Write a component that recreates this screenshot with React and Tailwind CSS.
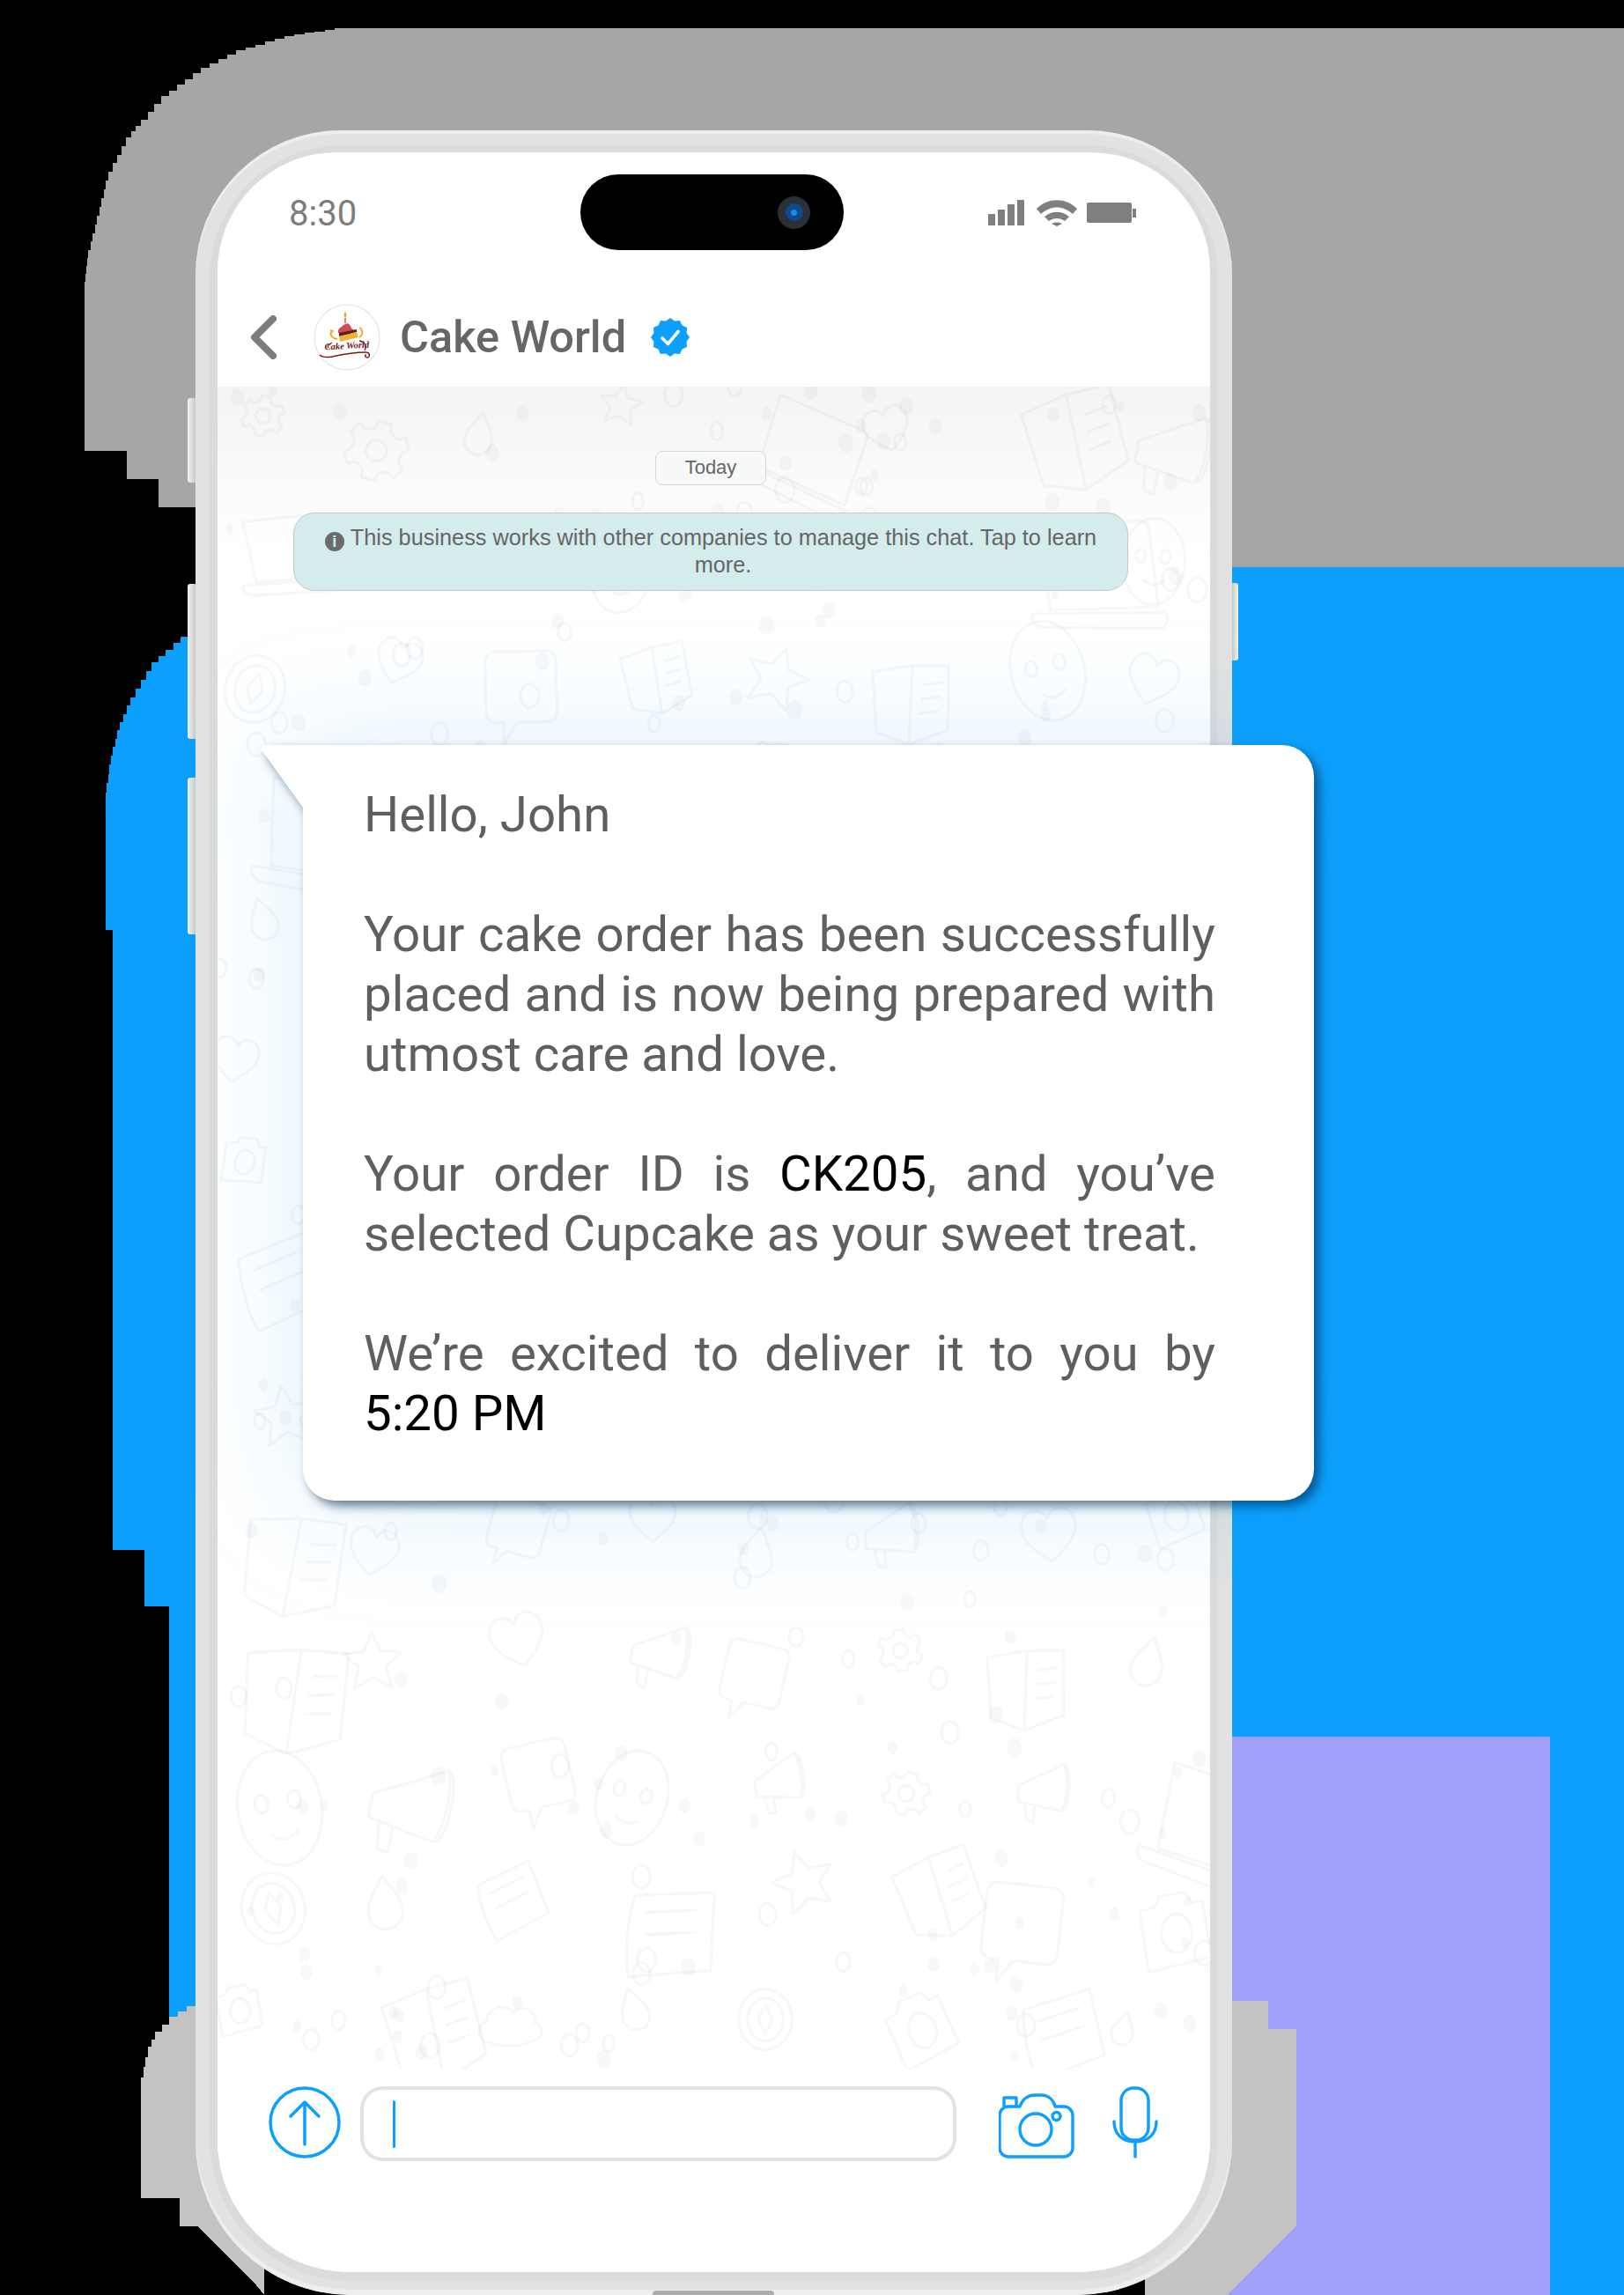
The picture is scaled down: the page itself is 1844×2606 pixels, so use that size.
import React from "react";

// staircase outline for the pixelated blobs behind the phone
function stairs(pts, step = 12) {
  const out = [pts[0]];
  for (let i = 1; i < pts.length; i++) {
    const [x0, y0] = pts[i - 1];
    const [x1, y1] = pts[i];
    const n = Math.max(1, Math.ceil(Math.hypot(x1 - x0, y1 - y0) / step));
    let py = y0;
    for (let k = 1; k <= n; k++) {
      const x = x0 + ((x1 - x0) * k) / n;
      const y = y0 + ((y1 - y0) * k) / n;
      out.push([x, py]);
      out.push([x, y]);
      py = y;
    }
  }
  return out.map((p) => p.join(",")).join(" ");
}

const grayArc = stairs([
  [96, 320], [100, 284], [110, 245], [123, 195], [143, 156], [160, 136], [183, 109], [228, 77], [268, 57], [323, 41], [380, 32],
]);
const blueArc = stairs([
  [120, 900], [124, 868], [128, 848], [136, 820], [148, 792], [172, 752], [213, 716],
]);
const lightArc = stairs([
  [160, 2359], [168, 2324], [176, 2307], [192, 2290], [222, 2272],
]);

function Backdrop() {
  return (
    <svg className="absolute inset-0" width="1844" height="2606" viewBox="0 0 1844 2606" shapeRendering="crispEdges">
      <polygon
        fill="#a6a6a6"
        points={`96,512 96,320 ${grayArc} 1844,32 1844,644 300,644 222,576 180,576 180,544 144,544 144,512`}
      />
      <polygon
        fill="#0c9ffb"
        points={`120,1056 120,900 ${blueArc} 300,716 300,2290 192,2290 192,1824 164,1824 164,1760 128,1760 128,1056`}
      />
      <rect x="1300" y="644" width="544" height="1962" fill="#0c9ffb" />
      <rect x="1300" y="1972" width="460" height="634" fill="#a0a0f8" />
      <polygon
        fill="#c4c3c1"
        points={`160,2496 160,2359 ${lightArc} 300,2272 300,2606 287,2590 224,2528 204,2528 204,2496`}
      />
      <polygon fill="#c4c3c1" points="1300,2272 1440,2272 1440,2304 1472,2304 1472,2527 1394,2606 1300,2606" />
    </svg>
  );
}

// faint chat wallpaper drawings
const shapes = [
  "M10 40c-10-2-10-18 2-20 2-12 20-14 26-4 10-6 22 2 18 14 8 4 6 16-4 16-12 4-30 2-42-6z",
  "M30 2l8 18 20 2-15 13 5 20-18-10-18 10 5-20L2 22l20-2z",
  "M8 18L78 4l8 70-72 18c-6-14-10-50-6-74zM20 32l46-10M22 52l46-10",
  "M30 54C8 38 2 26 8 14c6-10 18-8 22 2 4-10 16-12 22-2 6 12 0 24-22 40z",
  "M34 4a30 34 0 1 1 0 68 30 34 0 0 1 0-68zM34 14a20 24 0 1 1 0 48 20 24 0 0 1 0-48zM34 22l8 16-8 16-8-16z",
  "M30 2c2 18 8 26 26 28-18 2-24 10-26 28-2-18-8-26-26-28 18-2 24-10 26-28z",
  "M4 20L52 6l44-6 10 80-46 24-42-10zM52 6l8 98M68 28l24-6M68 46l24-6M68 64l24-6",
  "M20 2c10 16 16 24 16 34a16 16 0 0 1-32 0C4 26 10 18 20 2z",
  "M14 2h50c8 0 12 4 12 12v50c0 8-4 12-12 12H34L20 98V76h-6C6 76 2 72 2 64V14C2 6 6 2 14 2z",
  "M24 2h12l2 8 8 4 7-4 6 10-6 6v8l6 6-6 10-7-4-8 4-2 8H24l-2-8-8-4-7 4-6-10 6-6v-8l-6-6 6-10 7 4 8-4zM30 20a10 10 0 1 0 0 20 10 10 0 0 0 0-20z",
  "M40 2c22 0 38 24 38 52S62 106 40 106 2 82 2 54 18 2 40 2zM24 40a6 8 0 1 0 .1 0M54 40a6 8 0 1 0 .1 0M28 76c8 8 18 8 26 0",
  "M4 40l62-34c8 16 8 50 0 66L4 62zM66 6c12 0 14 64 0 66M14 62l4 26 10 2 0-24",
  "M6 22L20 18l4-10 24-4 6 10 10-2 8 52-58 14zM40 24a14 18 0 1 0 .1 0",
  "M26 4l100 16c6 1 8 4 8 10l-6 78-106-18zM4 90l126 24c6 1 6 8 2 12l-4 4L14 106C4 104 0 96 4 90z",
];

// fixed pseudo random, so the picture is the same on every run
const rand = (n) => {
  const v = Math.sin(n * 127.1 + 11.7) * 43758.5453;
  return v - Math.floor(v);
};

const doodles = [];
for (let row = 0; row < 14; row++) {
  for (let col = 0; col < 8; col++) {
    const n = row * 8 + col;
    doodles.push({
      d: shapes[Math.floor(rand(n) * shapes.length)],
      x: col * 146 + rand(n + 300) * 50 - 10,
      y: row * 140 + rand(n + 600) * 40 - 10,
      s: 0.75 + rand(n + 900) * 0.55,
      r: rand(n + 1200) * 40 - 20,
    });
  }
}
const dots = Array.from({ length: 340 }, (_, i) => ({
  x: rand(i + 2000) * 1127,
  y: rand(i + 3000) * 1900,
  r: 4 + rand(i + 4000) * 5,
  ring: i % 3 === 0,
}));

function Wallpaper() {
  return (
    <svg className="absolute inset-0 w-full h-full" aria-hidden="true">
      {dots.map((c, i) =>
        c.ring ? (
          <ellipse key={i} cx={c.x} cy={c.y} rx={c.r + 2} ry={c.r + 5} fill="none" stroke="#5a7282" strokeOpacity="0.055" strokeWidth="3" />
        ) : (
          <ellipse key={i} cx={c.x} cy={c.y} rx={c.r} ry={c.r + 2} fill="#5a7282" fillOpacity="0.05" />
        )
      )}
      {doodles.map((o, i) => (
        <path
          key={i}
          d={o.d}
          transform={`translate(${o.x} ${o.y}) rotate(${o.r}) scale(${o.s})`}
          fill="none"
          stroke="#5a7282"
          strokeOpacity="0.055"
          strokeWidth="3"
          vectorEffect="non-scaling-stroke"
          strokeLinejoin="round"
        />
      ))}
    </svg>
  );
}

function CakeLogo() {
  return (
    <svg width="76" height="76" viewBox="0 0 76 76">
      <circle cx="38" cy="38" r="37" fill="#fff" stroke="#e3e3e3" strokeWidth="1.2" />
      <path d="M36 9c2 3 2 5 0 7-2-2-2-4 0-7z" fill="#f0a030" />
      <path d="M36 16v6" stroke="#d4564e" strokeWidth="1.500" />
      <path d="M28 33c-1-5 3-6 5-8 3-2 5-4 7-2 3 2 2 5 5 6l3 2-11 5z" fill="#cf4b56" />
      <path d="M29 33l20-4v3l-20 5z" fill="#5a1f14" />
      <path d="M29 37l20-5 2 6-21 5z" fill="#f2b233" />
      <path d="M21 31c-3 3-1 8 6 9M19 30l4 1M52 27c4 2 5 8 0 11" stroke="#f2a81d" strokeWidth="1.800" fill="none" />
      <path d="M17 50c-2-2 0-4 4-6M52 42c6 1 9 6 6 11" stroke="#7c1a16" strokeWidth="1.300" fill="none" />
      <path d="M7 58c3 3 8 3 14 2 14-3 28-5 38-5 5 0 6 5 2 6-3 0-3-3-1-3" stroke="#7c1a16" strokeWidth="1.500" fill="none" />
      <text
        x="38"
        y="51"
        textAnchor="middle"
        transform="rotate(-3 38 51)"
        fontFamily="'Liberation Serif', serif"
        fontStyle="italic"
        fontWeight="700"
        fontSize="10.500"
        fill="#6f1a18"
      >
        Cake World
      </text>
    </svg>
  );
}

function VerifiedBadge() {
  const pts = [];
  for (let i = 0; i < 24; i++) {
    const a = (i / 24) * Math.PI * 2;
    const r = i % 2 === 0 ? 22 : 19.2;
    pts.push(`${22 + r * Math.sin(a)},${22 - r * Math.cos(a)}`);
  }
  return (
    <svg width="44" height="44" viewBox="0 0 44 44">
      <polygon points={pts.join(" ")} fill="#0c9ffb" strokeLinejoin="round" />
      <path d="M13 23l6.500 6.500L31 15.500" fill="none" stroke="#fff" strokeWidth="3.600" strokeLinecap="round" strokeLinejoin="round" />
    </svg>
  );
}

function StatusIcons() {
  return (
    <div className="flex items-start gap-[11px] ml-[164px] mt-[29px]">
      <div className="flex items-end gap-[3px] h-[29px] w-[44px]">
        <div className="w-[8px] h-[13px] bg-[#7f7f7f]" />
        <div className="w-[8px] h-[18px] bg-[#7f7f7f]" />
        <div className="w-[8px] h-[24px] bg-[#7f7f7f]" />
        <div className="w-[8px] h-[29px] bg-[#7f7f7f]" />
      </div>
      <svg width="46" height="30" viewBox="0 0 46 30">
        <path d="M0 10C13-3 33-3 46 10l-5 6C30 6 16 6 5 16z" fill="#7f7f7f" />
        <path d="M9 19c8-7 20-7 28 0l-5 5c-5-4-13-4-18 0z" fill="#7f7f7f" />
        <path d="M17 27c3-2 9-2 12 0l-6 3z" fill="#7f7f7f" />
      </svg>
      <div className="flex items-center mt-[3px]">
        <div className="w-[51px] h-[23px] rounded-[2px] bg-[#7f7f7f]" />
        <div className="w-[4px] h-[10px] ml-[1px] bg-[#7f7f7f]" />
      </div>
    </div>
  );
}

function Bubble() {
  return (
    <div className="relative ml-[97px] mt-[175px] w-[1148px] shrink-0 [filter:drop-shadow(6px_6px_6px_rgba(0,40,80,0.6))_drop-shadow(0_0_70px_rgba(13,160,250,0.15))]">
      <svg className="absolute left-[-48px] top-0" width="50" height="76" viewBox="0 0 50 76">
        <path d="M50 0H6C1 0 -1 3 2 7L50 74z" fill="#fff" />
      </svg>
      <div className="bg-white rounded-r-[36px] rounded-bl-[36px] pl-[69px] pr-[112px] pt-[45px] pb-[65px] font-['Roboto',sans-serif] text-[56.400px] leading-[68px] text-[#5f5f5f] text-justify">
        <p>Hello, John</p>
        <p className="mt-[68px]">Your cake order has been successfully placed and is now being prepared with utmost care and love.</p>
        <p className="mt-[68px]">
          Your order ID is <span className="text-black">CK205</span>, and you’ve selected Cupcake as your sweet treat.
        </p>
        <p className="mt-[68px]">
          We’re excited to deliver it to you by <span className="text-black">5:20 PM</span>
        </p>
      </div>
    </div>
  );
}

function Footer() {
  return (
    <div className="relative flex-1 bg-white rounded-b-[150px] flex items-start pt-[19px] pl-[58px]">
      <svg width="82" height="82" viewBox="0 0 82 82" fill="none" stroke="#0c9ffb" strokeLinecap="round" strokeLinejoin="round">
        <circle cx="41" cy="41" r="39" strokeWidth="3.500" />
        <path d="M41 66V18M25 34l16-16 16 16" strokeWidth="3.500" />
      </svg>
      <div className="ml-[22px] w-[677px] h-[85px] rounded-[26px] border-4 border-[#e3e3e3] flex items-center pl-[33px]">
        <div className="w-[3px] h-[54px] bg-[#0c9ffb] rounded-full" />
      </div>
      <svg className="ml-[48px] mt-[8px]" width="86" height="74" viewBox="14 17 86 74" fill="none" stroke="#0c9ffb" strokeWidth="3.400" strokeLinejoin="round">
        <path d="M15 42a10 10 0 0 1 10-10H38C41 23 48 19 55 19H62C70 19 76 24 78 32H88a10 10 0 0 1 10 10V79a10 10 0 0 1-10 10H25a10 10 0 0 1-10-10Z" />
        <path d="M20 32V22H34V32" />
        <circle cx="56" cy="58" r="18" />
        <circle cx="79.500" cy="43" r="4.500" />
      </svg>
      <svg className="ml-[43px]" width="52" height="82" viewBox="142 9 52 82" fill="none" stroke="#0c9ffb" strokeWidth="3.400" strokeLinecap="round">
        <rect x="152" y="11" width="31" height="59" rx="14" />
        <path d="M144 49C144 62 152 72 168 72C184 72 192 62 192 49M168 72V89" />
      </svg>
    </div>
  );
}

export default function App() {
  return (
    <div className="relative w-[1844px] h-[2606px] bg-black overflow-hidden pt-[148px] pl-[222px] font-['Roboto',sans-serif]">
      <Backdrop />

      {/* side buttons */}
      <div className="absolute left-[213px] top-[452px] w-[9px] h-[96px] rounded-l-[3px] bg-linear-to-r from-[#f2f2f2] to-[#c9c9c9]" />
      <div className="absolute left-[213px] top-[663px] w-[9px] h-[176px] rounded-l-[3px] bg-linear-to-r from-[#f2f2f2] to-[#c9c9c9]" />
      <div className="absolute left-[213px] top-[883px] w-[9px] h-[178px] rounded-l-[3px] bg-linear-to-r from-[#f2f2f2] to-[#c9c9c9]" />
      <div className="absolute left-[1399px] top-[662px] w-[7px] h-[88px] rounded-r-[3px] bg-linear-to-l from-[#f2f2f2] to-[#c9c9c9]" />

      <div className="relative w-[1177px] h-[2458px] rounded-t-[165px] rounded-b-[176px] bg-[#e2e2e2] shadow-[inset_0_4px_0_#ededed,inset_0_-6px_0_#eeeeee] pt-[17px] px-[16px]">
        <div className="w-[1145px] h-[2425px] rounded-t-[150px] rounded-b-[160px] bg-[#dbdbdb] pt-[8px] px-[9px]">
          <div className="w-[1127px] h-[2407px] rounded-t-[135px] rounded-b-[150px] bg-white flex flex-col">
            {/* status bar */}
            <div className="flex items-start pt-[25px] pl-[81px] h-[111px]">
              <div className="w-[331px] mt-[21px] text-[40px] leading-[47px] text-[#7d7d7d]">8:30</div>
              <div className="relative w-[299px] h-[86px] rounded-[43px] bg-black flex items-center justify-end pr-[38px]">
                <div className="w-[37px] h-[37px] rounded-full bg-[#2b3036] flex items-center justify-center">
                  <div className="w-[20px] h-[20px] rounded-full bg-[#0b4a8c] flex items-center justify-center">
                    <div className="w-[7px] h-[7px] rounded-full bg-[#1e88e5]" />
                  </div>
                </div>
              </div>
              <StatusIcons />
            </div>

            {/* chat header */}
            <div className="h-[155px] pt-[42px] pl-[37px] flex items-center">
              <svg width="30" height="50" viewBox="0 0 30 50" fill="none" stroke="#7c7c7c" strokeWidth="8" strokeLinecap="round" strokeLinejoin="round">
                <path d="M26 4L5 25L26 46" />
              </svg>
              <div className="ml-[42px]">
                <CakeLogo />
              </div>
              <div className="ml-[22px] w-[254px] text-[50.500px] leading-[58px] font-medium text-[#666666] whitespace-nowrap">Cake World</div>
              <div className="ml-[31px]">
                <VerifiedBadge />
              </div>
            </div>

            {/* chat area */}
            <div className="relative h-[1911px] shrink-0 bg-linear-to-b from-[#f4f4f4] via-[#ffffff] via-[10%] to-[#ffffff]">
              <Wallpaper />
              <div className="relative flex flex-col pt-[73px]">
                <div className="ml-[497px] w-[126px] h-[39px] pb-[3px] rounded-[8px] border border-[#d8d8d8] bg-[#f7f8f8] flex items-center justify-center font-['Liberation_Sans',sans-serif] text-[22px] text-[#666666]">
                  Today
                </div>
                <div className="ml-[86px] mt-[31px] w-[948px] h-[89px] rounded-[24px] border-[1.5px] border-[#c0cbca] bg-[#d4eceb] px-[30px] pt-[12px] text-center font-['Liberation_Sans',sans-serif] text-[25.300px] leading-[30px] text-[#666666]">
                  <span className="inline-flex w-[22px] h-[22px] mr-[7px] align-[-2px] rounded-full bg-[#6b6b6b] text-[#d4eceb] text-[18px] leading-[22px] font-bold justify-center">i</span>
                  This business works with other companies to manage this chat. Tap to learn <span className="inline-block ml-[28px]">more.</span>
                </div>
                <Bubble />
              </div>
            </div>

            <Footer />
          </div>
        </div>
        {/* home pill */}
        <div className="absolute left-[519px] bottom-0 w-[138px] h-[5px] rounded-t-[4px] bg-[#adadad]" />
      </div>
    </div>
  );
}
